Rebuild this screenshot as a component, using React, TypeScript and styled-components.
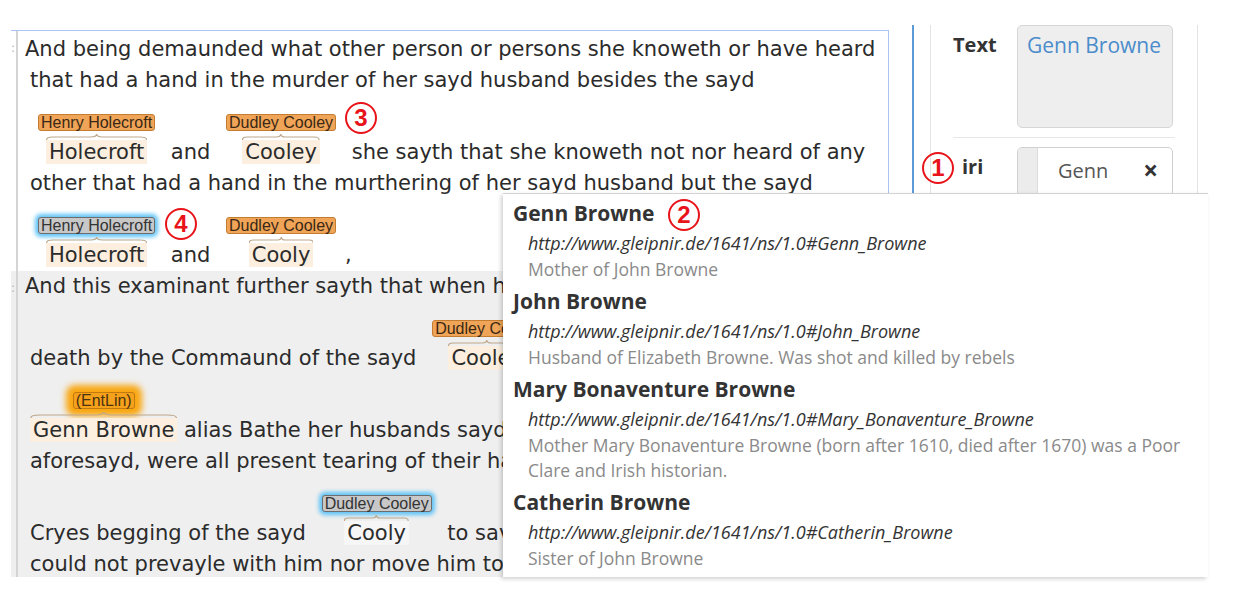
import React from 'react';
import styled, { createGlobalStyle, css } from 'styled-components';

type TagKind = 'entity' | 'focus' | 'glow';
type MarkTone = 'entity' | 'plain';

const suggestions = [
  {
    id: 'genn',
    name: 'Genn Browne',
    iri: 'http://www.gleipnir.de/1641/ns/1.0#Genn_Browne',
    note: 'Mother of John Browne',
  },
  {
    id: 'john',
    name: 'John Browne',
    iri: 'http://www.gleipnir.de/1641/ns/1.0#John_Browne',
    note: 'Husband of Elizabeth Browne. Was shot and killed by rebels',
  },
  {
    id: 'mary',
    name: 'Mary Bonaventure Browne',
    iri: 'http://www.gleipnir.de/1641/ns/1.0#Mary_Bonaventure_Browne',
    note: 'Mother Mary Bonaventure Browne (born after 1610, died after 1670) was a Poor Clare and Irish historian.',
  },
  {
    id: 'catherin',
    name: 'Catherin Browne',
    iri: 'http://www.gleipnir.de/1641/ns/1.0#Catherin_Browne',
    note: 'Sister of John Browne',
  },
];

const Annotated = ({
  label,
  kind = 'entity',
  tone = 'entity',
  children,
}: {
  label: string;
  kind?: TagKind;
  tone?: MarkTone;
  children: React.ReactNode;
}) => (
  <Anno>
    <Tag $kind={kind}>{label}</Tag>
    <Target>
      <Brace viewBox="0 0 100 8" preserveAspectRatio="none">
        <path
          d="M0.6 7 C0.6 5 2 4 7 4 L44 4 C48 4 50 3 50 1 C50 3 52 4 56 4 L93 4 C98 4 99.4 5 99.4 7"
          vectorEffect="non-scaling-stroke"
        />
      </Brace>
      <WordLine>
        <Mark $tone={tone}>{children}</Mark>
      </WordLine>
    </Target>
  </Anno>
);

const App = () => {
  return (
    <>
      <GlobalStyle />
      <Page>
        <Editor>
          <Para>
            <Gutter>:</Gutter>
            <ParaBody $top={3}>
              <TextLine>And being demaunded what other person or persons she knoweth or have heard</TextLine>
              <TextLine $indent={5}>that had a hand in the murder of her sayd husband besides the sayd</TextLine>
              <AnnoLine $indent={4}>
                <Annotated label="Henry Holecroft">Holecroft</Annotated>
                <Plain> and </Plain>
                <Annotated label="Dudley Cooley">Cooley</Annotated>
                <Plain> she sayth that she knoweth not nor heard of any</Plain>
              </AnnoLine>
              <TextLine $indent={5}>other that had a hand in the murthering of her sayd husband but the sayd</TextLine>
              <AnnoLine $indent={4}>
                <Annotated label="Henry Holecroft" kind="focus">Holecroft</Annotated>
                <Plain> and </Plain>
                <Annotated label="Dudley Cooley">Cooly</Annotated>
                <Plain>,</Plain>
              </AnnoLine>
            </ParaBody>
          </Para>
          <Para $shaded>
            <Gutter>:</Gutter>
            <ParaBody>
              <TextLine>And this examinant further sayth that when her husband was put to</TextLine>
              <AnnoLine $indent={5}>
                <Plain>death by the Commaund of the sayd </Plain>
                <Annotated label="Dudley Cooley">Cooley</Annotated>
                <Plain> she and her children</Plain>
              </AnnoLine>
              <AnnoLine $indent={5}>
                <Annotated label="(EntLin)" kind="glow">Genn Browne</Annotated>
                <Plain> alias Bathe her husbands sayd mother and the rest</Plain>
              </AnnoLine>
              <TextLine $indent={5}>aforesayd, were all present tearing of their haire and making</TextLine>
              <AnnoLine $indent={5}>
                <Plain>Cryes begging of the sayd </Plain>
                <Annotated label="Dudley Cooley" kind="focus" tone="plain">Cooly</Annotated>
                <Plain> to save his life but</Plain>
              </AnnoLine>
              <TextLine $indent={5}>could not prevayle with him nor move him to any pittie</TextLine>
            </ParaBody>
          </Para>
        </Editor>

        <Sidebar>
          <Panel>
            <Form>
              <Label>Text</Label>
              <TextBox>Genn Browne</TextBox>
              <Divider />
              <Label $indent={9}>iri</Label>
              <Select>
                <SelectCap />
                <SelectValue>Genn</SelectValue>
                <Clear>×</Clear>
              </Select>
            </Form>
          </Panel>
        </Sidebar>

        <Dropdown>
          {suggestions.map((item) => (
            <Suggestion key={item.id}>
              <SuggestionName>{item.name}</SuggestionName>
              <SuggestionIri>{item.iri}</SuggestionIri>
              <SuggestionNote>{item.note}</SuggestionNote>
            </Suggestion>
          ))}
        </Dropdown>

        <Callout $x={922} $y={152}>1</Callout>
        <Callout $x={668} $y={199}>2</Callout>
        <Callout $x={345} $y={102}>3</Callout>
        <Callout $x={165} $y={208}>4</Callout>
      </Page>
    </>
  );
};

const GlobalStyle = createGlobalStyle`
  html, body {
    margin: 0;
    padding: 0;
    background: #ffffff;
  }

  body {
    width: 1237px;
    height: 605px;
    overflow: hidden;
    font-family: "DejaVu Sans", "Noto Sans", sans-serif;
  }

  * {
    box-sizing: border-box;
  }
`;

const Page = styled.div`
  position: relative;
  width: 1237px;
  height: 605px;

  display: flex;
  align-items: flex-start;
`;

const Editor = styled.div`
  flex: none;
  width: 878px;
  height: 547px;
  margin: 30px 0 0 11px;

  border-top: 1px solid #a9c3f2;
  border-right: 1px solid #a9c3f2;
  overflow: hidden;

  color: #2b2b2b;
  font-family: "DejaVu Sans", "Noto Sans", sans-serif;
  font-size: 21px;
  line-height: 31px;
`;

const Para = styled.div<{ $shaded?: boolean }>`
  display: flex;
  background: ${(p) => (p.$shaded ? '#efefef' : 'transparent')};
`;

const Gutter = styled.div`
  flex: none;
  width: 5px;
  padding-top: 2px;

  color: #b5b5b5;
  font-size: 12px;
  line-height: 31px;
`;

const ParaBody = styled.div<{ $top?: number }>`
  flex: 1;
  min-width: 0;
  padding: ${(p) => p.$top ?? 0}px 0 0 7px;
  border-left: 2px solid #d4d4d4;
`;

const TextLine = styled.div<{ $indent?: number }>`
  height: 31px;
  padding-left: ${(p) => p.$indent ?? 0}px;
  white-space: pre;
`;

const AnnoLine = styled.div<{ $indent?: number }>`
  height: 72px;
  padding-left: ${(p) => p.$indent ?? 0}px;

  display: flex;
  align-items: flex-end;
  white-space: pre;
`;

const Plain = styled.span`
  flex: none;
  line-height: 31px;
`;

const Anno = styled.span`
  flex: none;

  display: flex;
  flex-direction: column;
  align-items: center;
`;

const tagKinds = {
  entity: css`
    background: #efa457;
    border-color: #c47c30;
    color: #3a2814;
  `,
  focus: css`
    background: #c8c8c8;
    border-color: #6d6d6d;
    color: #333333;
    box-shadow: 0 0 4px 3px #5ec3f7;
  `,
  glow: css`
    background: #f6a11c;
    border-color: #c17a10;
    color: #4b3210;
    box-shadow: 0 0 6px 7px #f9a60f;
  `,
};

const Tag = styled.span<{ $kind: TagKind }>`
  margin: 0 9px 2px;
  padding: 0 2px;

  border: 1px solid;
  border-radius: 3px;

  font-family: "Liberation Sans", Arial, sans-serif;
  font-size: 16px;
  line-height: 15px;
  white-space: nowrap;

  ${(p) => tagKinds[p.$kind]}
`;

const Target = styled.span`
  display: flex;
  flex-direction: column;
  align-items: stretch;
`;

const Brace = styled.svg`
  display: block;
  width: 0;
  min-width: 100%;
  height: 8px;
  margin-bottom: -4px;

  fill: none;
  stroke: #bea88b;
  stroke-width: 1.2;
`;

const WordLine = styled.span`
  line-height: 31px;
`;

const Mark = styled.span<{ $tone: MarkTone }>`
  padding: 0 3px;
  background: ${(p) => (p.$tone === 'entity' ? '#fcefdf' : '#f6f6f6')};
`;

const Sidebar = styled.aside`
  flex: none;
  width: 296px;
  height: 168px;
  margin: 25px 0 0 23px;

  display: flex;
  border-left: 2px solid #5d9bd6;
  overflow: hidden;
`;

const Panel = styled.div`
  width: 268px;
  margin-left: 16px;
  padding-left: 22px;

  border-left: 1px solid #e3e3e3;
  border-right: 1px solid #e3e3e3;

  font-family: "Open Sans", sans-serif;
`;

const Form = styled.div`
  display: grid;
  grid-template-columns: 64px 156px;
  align-items: start;
`;

const Label = styled.div<{ $indent?: number }>`
  padding-left: ${(p) => p.$indent ?? 0}px;

  color: #333333;
  font-size: 20px;
  font-weight: 700;
  line-height: 40px;
`;

const TextBox = styled.div`
  height: 103px;
  padding: 6px 9px;

  background: #eeeeee;
  border: 1px solid #d6d6d6;
  border-radius: 5px;

  color: #4a8ccb;
  font-size: 21px;
  line-height: 26px;
`;

const Divider = styled.div`
  grid-column: 1 / -1;
  height: 1px;
  margin: 9px -2px 9px 0;
  background: #e6e6e6;
`;

const Select = styled.div`
  height: 50px;

  display: flex;
  align-items: flex-start;

  background: #ffffff;
  border: 1px solid #d0d0d0;
  border-radius: 5px;
  overflow: hidden;
`;

const SelectCap = styled.div`
  width: 20px;
  height: 100%;
  background: #ececec;
  border-right: 1px solid #dcdcdc;
`;

const SelectValue = styled.span`
  padding: 10px 0 0 20px;

  color: #555555;
  font-size: 20px;
  line-height: 26px;
`;

const Clear = styled.span`
  margin-left: auto;
  padding: 9px 14px 0 0;

  color: #333333;
  font-size: 26px;
  font-weight: 700;
  line-height: 26px;
`;

const Dropdown = styled.div`
  position: absolute;
  left: 503px;
  top: 193px;
  width: 705px;
  height: 384px;
  padding: 3px 10px 0 10px;

  background: #ffffff;
  border-top: 1px solid #d2d2d2;
  box-shadow: -2px 2px 4px rgba(0, 0, 0, 0.18);
  overflow: hidden;

  font-family: "Open Sans", sans-serif;
`;

const Suggestion = styled.div`
  padding-bottom: 3px;
`;

const SuggestionName = styled.div`
  color: #333333;
  font-size: 21px;
  font-weight: 700;
  line-height: 33px;
`;

const SuggestionIri = styled.div`
  padding-left: 15px;

  color: #333333;
  font-size: 18px;
  font-style: italic;
  line-height: 27px;
`;

const SuggestionNote = styled.div`
  padding-left: 15px;

  color: #8a8a8a;
  font-size: 17.5px;
  line-height: 25px;
`;

const Callout = styled.span<{ $x: number; $y: number }>`
  position: absolute;
  left: ${(p) => p.$x}px;
  top: ${(p) => p.$y}px;
  width: 32px;
  height: 32px;

  display: flex;
  align-items: center;
  justify-content: center;

  border: 2px solid #e8141a;
  border-radius: 50%;

  color: #e8141a;
  font-family: "Liberation Sans", Arial, sans-serif;
  font-size: 24px;
  font-weight: 700;
`;

export default App;
